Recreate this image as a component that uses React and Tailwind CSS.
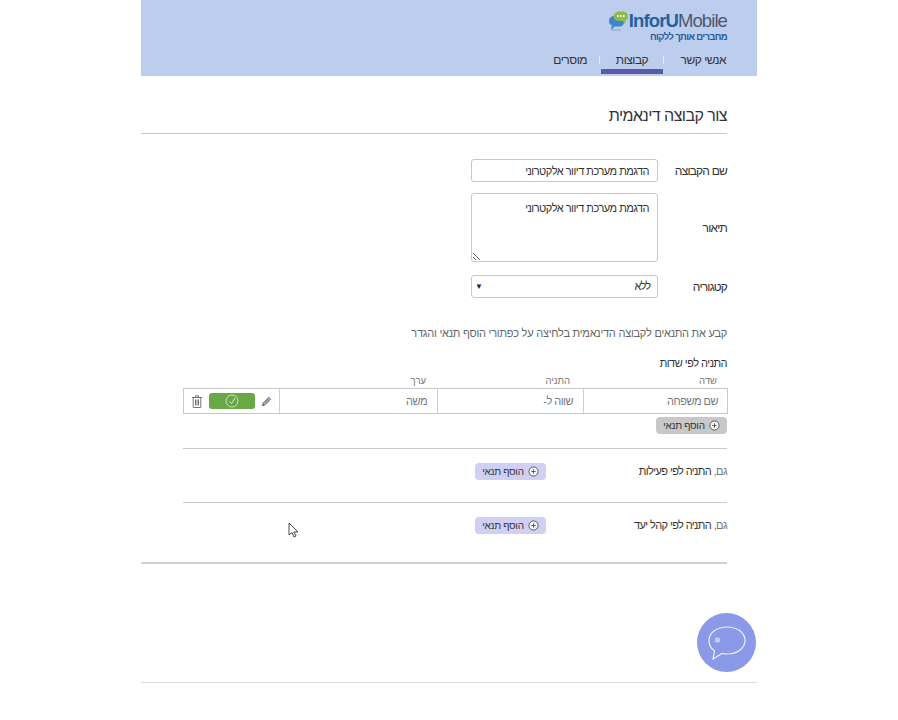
const FONT = "font-['Liberation_Sans',Arial,sans-serif]"

function PlusCircle() {
  return (
    <svg width="11" height="11" viewBox="0 0 12 12" className="shrink-0">
      <circle cx="6" cy="6" r="5" fill="#f4f4f4" stroke="#444" strokeWidth="0.9" />
      <path d="M6 3.6v4.8M3.6 6h4.8" stroke="#444" strokeWidth="0.9" />
    </svg>
  )
}

function AddButton({ gray }) {
  return (
    <button
      className={`flex h-[17px] w-[71px] items-center justify-center gap-1 rounded-[4px] text-[10px] tracking-[-0.3px] text-[#333] ${
        gray ? 'bg-[#c8c8c8]' : 'bg-[#d0d0f4]'
      }`}
    >
      <PlusCircle />
      <span>הוסף תנאי</span>
    </button>
  )
}

function FormRow({ label, className, children }) {
  return (
    <div className={`flex items-center ${className}`}>
      <label className="w-[69px] shrink-0 text-[12px] tracking-[-0.8px] text-[#333]">{label}</label>
      {children}
    </div>
  )
}

function AndRow({ label, className }) {
  return (
    <div className={`flex items-center ${className}`}>
      <div className="w-[181px] shrink-0 text-[11px] tracking-[-0.6px] text-[#333]">
        <span className="text-[#777]">גם, </span>
        {label}
      </div>
      <AddButton />
    </div>
  )
}

export default function App() {
  return (
    <div dir="rtl" className={`${FONT} mx-auto h-[720px] w-[616px] bg-white`}>
      <header className="h-[76px] bg-[#bccdee] pr-[30px]">
        <div dir="ltr" className="flex h-[46px] flex-col items-end pt-[10px]">
          <div className="flex h-[21px] items-center">
            <svg width="21" height="20" viewBox="0 0 22 18" preserveAspectRatio="none">
              <path d="M1 9c0-3 3-5 7-5h4c3 0 5 2 5 5s-2 5-5 5H7l-4 3 1-4C2 12 1 11 1 9z" fill="#3f87c7" />
              <path d="M6 5c0-3 3-4.500 6-4.500h3c4 0 6 2 6 4.500 0 2-1 3.500-3 4l1 3-4-3h-3C8 9 6 7.500 6 5z" fill="#8dbb4b" />
              <circle cx="10.500" cy="4.500" r="1" fill="#fff" />
              <circle cx="13.500" cy="4.500" r="1" fill="#fff" />
              <circle cx="16.500" cy="4.500" r="1" fill="#fff" />
              <path d="M4 17h9" stroke="#9fb4d4" strokeWidth="1.500" />
            </svg>
            <span className="pt-[2px] text-[18.500px] leading-none tracking-[-0.9px] text-[#4a5a6e]">
              <span className="font-bold text-[#23639f]">InforU</span>Mobile
            </span>
          </div>
          <div dir="rtl" className="text-[9.500px] leading-[11px] font-bold tracking-[-0.65px] text-[#2a5a9c]">
            מחברים אותך ללקוח
          </div>
        </div>
        <nav className="flex h-[28px] items-start text-[12px] tracking-[-0.5px] text-[#333]">
          <a className="flex h-[28px] w-[63px] items-center whitespace-nowrap pr-px">אנשי קשר</a>
          <span className="mt-[10px] h-[8px] w-px bg-[#e8eef9]" />
          <a className="flex h-[28px] w-[62px] justify-center border-b-[5px] border-[#5a5aa8] pt-[5px] whitespace-nowrap">
            קבוצות
          </a>
          <span className="mt-[10px] mr-[1px] h-[8px] w-px bg-[#e8eef9]" />
          <a className="mr-[12px] flex h-[28px] items-center whitespace-nowrap">מוסרים</a>
        </nav>
      </header>

      <div className="mr-[30px]">
        <h1 className="mt-[29px] h-[28px] text-[16px] leading-[22px] tracking-[-0.55px] text-[#333]">
          צור קבוצה דינאמית
        </h1>
        <div className="h-px bg-[#c9c9c9]" />

        <FormRow label="שם הקבוצה" className="mt-[25px]">
          <input
            readOnly
            value="הדגמת מערכת דיוור אלקטרוני"
            className="h-[23px] w-[187px] rounded-[3px] border border-[#c8c8c8] bg-white px-2 text-[11px] tracking-[-0.5px] text-[#333] outline-none"
          />
        </FormRow>
        <FormRow label="תיאור" className="mt-[11px]">
          <textarea
            readOnly
            value="הדגמת מערכת דיוור אלקטרוני"
            className="h-[69px] w-[187px] rounded-[3px] border border-[#c8c8c8] bg-white px-2 py-[7px] text-[11px] leading-[14px] tracking-[-0.5px] text-[#333] outline-none"
          />
        </FormRow>
        <FormRow label="קטגוריה" className="mt-[13px]">
          <div className="flex h-[23px] w-[187px] items-center justify-between rounded-[3px] border border-[#c8c8c8] bg-white pr-[7px] pl-[3px] text-[11px] tracking-[-1px] text-[#333]">
            <span>ללא</span>
            <span className="text-[8px] text-[#222]">▼</span>
          </div>
        </FormRow>

        <p className="mt-[28px] h-[14px] text-[11px] leading-[14px] tracking-[-0.24px] text-[#666]">
          קבע את התנאים לקבוצה הדינאמית בלחיצה על כפתורי הוסף תנאי והגדר
        </p>

        <div className="w-[544px]">
          <h2 className="mt-[16px] h-[14px] text-[11px] leading-[14px] tracking-[-0.5px] text-[#333]">התניה לפי שדות</h2>
          <div className="mt-[4px] flex h-[14px] text-[9.500px] leading-[14px] text-[#777]">
            <div className="w-[145px] pr-[10px]">שדה</div>
            <div className="w-[146px] pr-[12px]">התניה</div>
            <div className="pr-[10px]">ערך</div>
          </div>
          <div className="-mr-px flex h-[26px] border border-[#c8c8c8] text-[11px] tracking-[-0.5px] text-[#777]">
            <div className="flex w-[144px] items-center border-l border-[#c8d4c8] pr-[9px]">שם משפחה</div>
            <div className="flex w-[146px] items-center border-l border-[#c8d4c8] pr-[10px]">שווה ל-</div>
            <div className="flex w-[158px] items-center border-l border-[#c8d4c8] pr-[10px]">משה</div>
            <div className="flex flex-1 items-center pr-[7px]">
              <svg width="11" height="11" viewBox="0 0 12 12">
                <path d="M8.500 1.200l2.300 2.300-6 6-3.300 1 1-3.300z" fill="#aaa" stroke="#666" strokeWidth="0.7" />
                <path d="M6.800 3l2.200 2.200M5.500 4.300l2.200 2.200M4.200 5.600l2.200 2.200" stroke="#666" strokeWidth="0.6" />
                <path d="M1.500 10.500l.6-2 1.400 1.400z" fill="#444" />
              </svg>
              <div className="mr-[6px] flex h-[16px] w-[46px] items-center justify-center rounded-[3px] bg-[#6aa846]">
                <svg width="14" height="14" viewBox="0 0 14 14" fill="none" stroke="#e4f0dc">
                  <circle cx="7" cy="7" r="6" strokeWidth="0.8" />
                  <path d="M4.500 7.500l2 2 3.500-5.500" strokeWidth="0.9" />
                </svg>
              </div>
              <svg className="mr-[7px]" width="10" height="13" viewBox="0 0 10 13" fill="none" stroke="#666" strokeWidth="0.9">
                <path d="M0 2.500h10M3.500 2.500V.8h3v1.700M1.200 2.500v10h7.600v-10M3.500 4.500v6M5 4.500v6M6.500 4.500v6" />
              </svg>
            </div>
          </div>
          <div className="mt-[3px]">
            <AddButton gray />
          </div>
          <div className="mt-[14px] h-px bg-[#c9c9c9]" />
          <AndRow label="התניה לפי פעילות" className="mt-[14px]" />
          <div className="mt-[22px] h-px bg-[#c9c9c9]" />
          <AndRow label="התניה לפי קהל יעד" className="mt-[14px]" />
        </div>
        <div className="mt-[28px] h-[2px] bg-[#cfd3cc]" />
      </div>

      <div className="mt-[118px] h-px bg-[#dcdcdc]" />

      {/* mouse pointer caught in the shot */}
      <svg className="absolute top-[522px] left-[288px]" width="11" height="17" viewBox="0 0 11 17">
        <path d="M1 1v12l3-2.500 2 4.500 2-1-2-4h4z" fill="#fff" stroke="#333" strokeWidth="0.9" />
      </svg>

      <button className="fixed top-[613px] left-[697px] flex h-[59px] w-[59px] items-center justify-center rounded-full bg-[#8a99e8]">
        <svg width="40" height="36" viewBox="0 0 40 36" fill="none">
          <path
            d="M20 2c10 0 18 5.500 18 13.500S30 29 20 29c-2 0-3.500-.2-5-.5L6 34l1.500-8C4 23.500 2 20 2 15.500 2 7.500 10 2 20 2z"
            stroke="#eef0fc"
            strokeWidth="1.200"
          />
          <circle cx="10.500" cy="15" r="2.700" fill="#c5ccf5" />
        </svg>
      </button>
    </div>
  )
}
